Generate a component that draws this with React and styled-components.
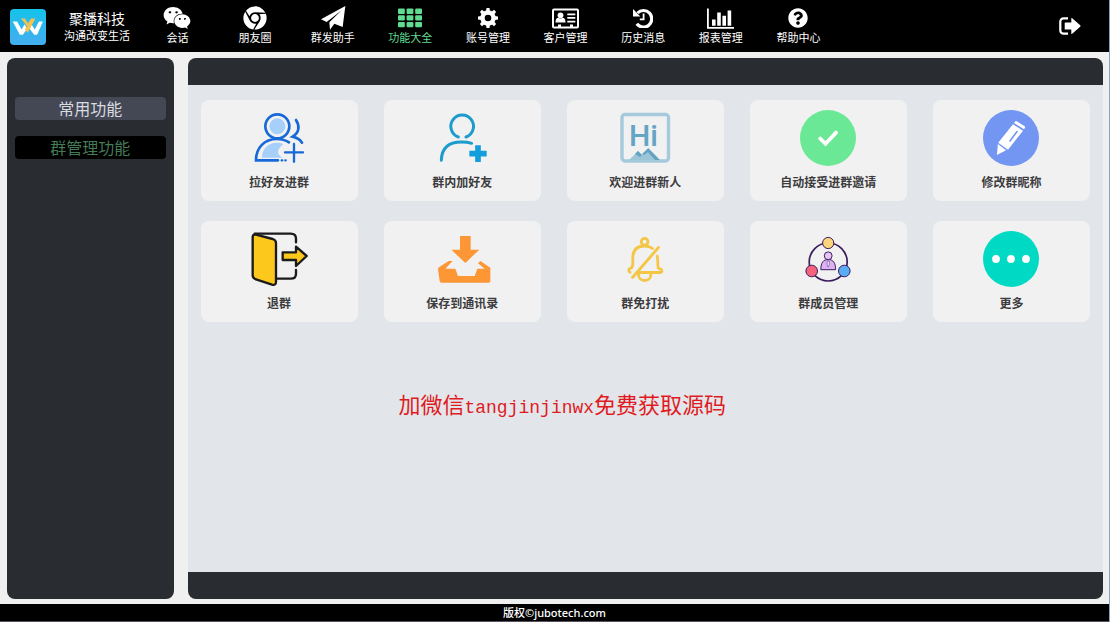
import styled, { createGlobalStyle, css } from "styled-components";
import { FaWeixin, FaChrome, FaQuestionCircle } from "react-icons/fa";

const GlobalStyle = createGlobalStyle`
    * {
        box-sizing: border-box;
    }
    body {
        margin: 0;
        background-color: #f1f0f1;
        font-family: "Noto Sans", "Noto Sans CJK SC", sans-serif;
    }
    button {
        font-family: inherit;
        border: none;
        cursor: pointer;
    }
`;
const Page = styled.div`
    display: flex;
    flex-direction: column;
    min-height: 100vh;
    border-right: 1px solid #86a3bb;
`;
const Header = styled.header`
    display: flex;
    align-items: center;
    height: 52px;
    color: white;
    background-color: black;
`;
const Brand = styled.div`
    display: flex;
    align-items: center;
    gap: 18px;
    width: 12.5%;
    padding-top: 1px;
    padding-left: 10px;
    flex-shrink: 0;
`;
const BrandText = styled.div`
    display: flex;
    flex-direction: column;
    align-items: center;
    white-space: nowrap;
`;
const BrandName = styled.span`
    font-size: 14px;
    line-height: 18px;
`;
const BrandSlogan = styled.span`
    font-size: 11px;
    line-height: 16px;
`;
const Nav = styled.nav`
    display: flex;
    width: 63%;
`;
const NavLink = styled.a`
    display: flex;
    flex: 1;
    flex-direction: column;
    align-items: center;
    gap: 1px;
    padding-top: 1px;
    font-size: 11px;
    line-height: 16px;
    white-space: nowrap;
    text-decoration: none;
    color: ${({ $active }) => ($active ? "#5fdc92" : "white")};
`;
const NavIcon = styled.span`
    display: flex;
    align-items: center;
    justify-content: center;
    height: 22px;
    svg {
        flex-shrink: 0;
        width: ${({ $size }) => $size}px;
        height: ${({ $size }) => $size}px;
    }
`;
const ExitButton = styled.button`
    display: flex;
    margin-left: auto;
    margin-right: 28px;
    padding: 0;
    color: white;
    background: none;
`;
const Body = styled.div`
    display: flex;
    flex: 1;
    gap: 14px;
    padding: 6px 6px 5px 7px;
`;
const Sidebar = styled.aside`
    display: flex;
    flex-direction: column;
    gap: 16px;
    width: 15.2%;
    padding: 39px 8px;
    border-radius: 8px;
    background-color: #292c31;
`;
const SideButton = styled.button`
    height: 23px;
    padding: 0;
    border-radius: 4px;
    font-size: 16px;
    line-height: 24px;
    color: #d9dbe0;
    background-color: #444854;
    ${({ $active }) =>
        $active &&
        css`
            color: #447a56;
            background-color: black;
        `}
`;
const Main = styled.main`
    display: flex;
    flex: 1;
    flex-direction: column;
    overflow: hidden;
    border-top: 27px solid #292c31;
    border-bottom: 27px solid #292c31;
    border-radius: 8px;
    background-color: #e2e6ea;
`;
const CardGrid = styled.div`
    display: grid;
    grid-template-columns: repeat(5, 1fr);
    gap: 20px 26px;
    padding: 15px 13px;
`;
const Card = styled.button`
    display: flex;
    flex-direction: column;
    align-items: center;
    justify-content: flex-start;
    gap: 9px;
    height: 101px;
    padding: 10px 0;
    border-radius: 8px;
    background-color: #f1f1f1;
`;
const CardIcon = styled.svg`
    width: 56px;
    height: 56px;
    overflow: visible;
`;
const CardLabel = styled.span`
    font-size: 12px;
    font-weight: 600;
    line-height: 16px;
    color: #3c3c3e;
`;
const Notice = styled.p`
    margin: 53px 0 0;
    padding-right: 166px;
    font-family: "Liberation Serif", "Noto Sans CJK SC", serif;
    font-size: 22px;
    line-height: 32px;
    text-align: center;
    color: #e01b1f;
`;
const NoticeId = styled.span`
    font-family: "Liberation Mono", monospace;
    font-size: 18px;
`;
const Footer = styled.footer`
    height: 18px;
    border-bottom: 1px solid #57505f;
    font-size: 11px;
    font-weight: 500;
    line-height: 17px;
    text-align: center;
    color: white;
    background-color: black;
`;

const Logo = () => (
    <svg width="36" height="36" viewBox="0 0 106 106" aria-hidden="true">
        <defs>
            <linearGradient id="logoBg" x1="0" y1="0" x2="0" y2="1">
                <stop offset="0" stopColor="#14c3ea" />
                <stop offset="1" stopColor="#45adf0" />
            </linearGradient>
        </defs>
        <rect width="106" height="106" rx="12" fill="url(#logoBg)" />
        <path d="M8 37h13l13 23 9-15 10 17 10-17 10 15 12-23h12L80 76h-9L54 53 38 76h-9Z" fill="#fff" />
        <path d="M32 28h12l9 14 9-14h13L60 56l-8 14-8-10 6-10Z" fill="#f3c251" />
    </svg>
);

const PlaneIcon = () => (
    <svg viewBox="150 17 78 78" fill="currentColor">
        <path d="M226 20L218 83 193 73 180 91 178 69 215 33 170 68 153 60Z" />
    </svg>
);

const GridIcon = () => (
    <svg viewBox="0 0 24 24" fill="currentColor">
        {[2.5, 9.2, 15.9].map((y) =>
            [0, 8.6, 17.2].map((x) => <rect key={x + "-" + y} x={x} y={y} width="6.800" height="5.400" rx="1" />)
        )}
    </svg>
);

const GearIcon = () => (
    <svg viewBox="0 0 20 20" fill="currentColor">
        <circle cx="10" cy="10" r="5.500" fill="none" stroke="currentColor" strokeWidth="4.400" />
        {[0, 45, 90, 135, 180, 225, 270, 315].map((deg) => (
            <path key={deg} d="M8.100 3.500L8.500 0h3l.4 3.500Z" transform={`rotate(${deg} 10 10)`} />
        ))}
    </svg>
);

const ContactsIcon = () => (
    <svg viewBox="0 -2.500 27 27" fill="currentColor">
        <path
            fillRule="evenodd"
            d="M2 1h23a2 2 0 0 1 2 2v16a2 2 0 0 1-2 2H2a2 2 0 0 1-2-2V3a2 2 0 0 1 2-2Zm0 2v16h4v-2h3v2h9v-2h3v2h4V3Z"
        />
        <circle cx="8.500" cy="7.800" r="2.900" />
        <path d="M3.500 15c0-3.200 1-4.800 2.800-4.800 1.400 1.100 3 1.100 4.400 0 1.800 0 2.800 1.600 2.800 4.800Z" />
        <path d="M15.300 6h8v1.700h-8zM15.300 9.600h8v1.700h-8zM15.300 13.200h8v1.700h-8z" />
    </svg>
);

const HistoryIcon = () => (
    <svg viewBox="0 0 20 20" fill="none" stroke="currentColor">
        <path d="M4.500 5A8.300 8.300 0 1 1 3.800 15.800" strokeWidth="3.200" />
        <path d="M0 1v7.400h7.400Z" fill="currentColor" stroke="none" />
        <path d="M10.600 5.500v5.800H6.800" strokeWidth="1.800" />
    </svg>
);

const ChartIcon = () => (
    <svg viewBox="0 -2.500 27 27" fill="currentColor">
        <path d="M0 1h1.800v18.500H27v1.700H0zM5 12h3.600v6.300H5zM10.200 5h3.600v13.300h-3.600zM15.400 8.300H19v10h-3.600zM20.600 3h3.600v15.300h-3.600z" />
    </svg>
);

const ExitIcon = () => (
    <svg width="22" height="18" viewBox="0 0 22 18">
        <path d="M9 1.300H4.500A3.200 3.200 0 0 0 1.300 4.500v9a3.200 3.200 0 0 0 3.200 3.200H9" fill="none" stroke="#fff" strokeWidth="2.200" />
        <path d="M6.300 5.500h6V1.600q0-1 .9-.3l8 7q.7.700 0 1.400l-8 7q-.9.700-.9-.3V12.500h-6q-.6 0-.6-.6V6.100q0-.6.600-.6Z" fill="#fff" />
    </svg>
);

const PullFriend = () => (
    <CardIcon viewBox="181 60 168 168" fill="none" stroke="#1669d6" strokeWidth="8" strokeLinecap="round">
        <circle cx="260" cy="109" r="36" />
        <circle cx="260" cy="109" r="24" fill="#a6cffa" stroke="none" />
        <path d="M262 211H196c0-38 26-64 62-64 14 0 26 3 37 10" />
        <path d="M214 203c0-26 18-45 44-45 8 0 14 1 20 4-18 16-22 28-4 41Z" fill="#a6cffa" stroke="none" />
        <path d="M273 211h2M284 211h1" strokeWidth="7" />
        <path d="M316 90c12 18 10 38-10 50 12 3 22 9 28 18" />
        <path d="M310 162v53M283 187h54" strokeWidth="7" />
    </CardIcon>
);

const AddFriend = () => (
    <CardIcon viewBox="732 60 168 168" fill="none" stroke="#1c9bcd" strokeWidth="9" strokeLinecap="round">
        <path d="M805 141a34 34 0 1 1 23 0" />
        <path d="M754 211c1-37 22-55 60-55 12 0 22 1 31 4" />
        <path d="M864 166v50M838 191h52" stroke="#139ddb" strokeWidth="17" strokeLinecap="butt" />
    </CardIcon>
);

const WelcomeText = styled.text`
    font-family: Roboto, sans-serif;
    font-size: 30px;
    font-weight: 500;
`;
const Welcome = () => (
    <CardIcon viewBox="0 0 56 56">
        <rect x="5" y="4.500" width="46.500" height="46.500" rx="3" fill="none" stroke="#a4cadb" strokeWidth="3.400" />
        <WelcomeText x="12" y="36" fill="#63a5c5">Hi</WelcomeText>
        <path d="M12 50L21 41l4 4 6-7 11 12Z" fill="#9cc5d8" />
        <path d="M21 41l4 4-2 2-5-3ZM31.400 38.300L43 50H38l-7-8-4 3-2-1Z" fill="#62a3c2" />
    </CardIcon>
);

const AutoAccept = () => (
    <CardIcon viewBox="0 0 56 56">
        <circle cx="28" cy="28" r="28" fill="#6be895" />
        <path d="M20.200 28.500l5.300 5.300L36 22.600" fill="none" stroke="#fff" strokeWidth="3.800" strokeLinecap="round" />
    </CardIcon>
);

const EditName = () => (
    <CardIcon viewBox="0 0 56 56">
        <circle cx="28" cy="28" r="28" fill="#7396f3" />
        <g fill="#fff">
            <path d="M32.200 11.400q.6-.7 1.500-.1l8 5q.8.600.3 1.400l-1 1.500-10-6.300Z" />
            <path d="M30 14.200l10 6.500L25 39.700l-9.800-7Z" />
            <path d="M14.900 34l8.200 6.200-9.200 4.700Z" />
        </g>
        <path d="M27 31l7-9.500" stroke="#7396f3" strokeWidth="1.600" strokeLinecap="round" />
    </CardIcon>
);

const LeaveGroup = () => (
    <CardIcon viewBox="181 48 168 168" fill="#fcc81c" stroke="#1b1b1b" strokeWidth="7" strokeLinecap="round" strokeLinejoin="round">
        <path d="M192 56h108q16 0 16 15v11M316 165v11q0 15-16 15h-42" fill="none" />
        <path d="M196 59l50 13q10 3 10 12v116q0 12-12 9l-48-16q-10-3-10-12V67q0-10 10-8Z" />
        <path d="M276 112h40V95l32 28-32 30v-18h-40Z" />
    </CardIcon>
);

const SaveContacts = () => (
    <CardIcon viewBox="732 48 168 168" fill="#fd9736">
        <path d="M810 63h32v41h26l-42 40-42-40h26Z" />
        <path d="M776 138h12l-22 23h30l8 22h50l8-22h22l-20-16 7-7 30 20v40q0 5-5 5H754q-4 0-5-5l-5-35q0-4 4-7Z" />
    </CardIcon>
);

const MuteGroup = () => (
    <CardIcon viewBox="0 0 56 56" fill="none" stroke="#f4c645" strokeWidth="2.800" strokeLinecap="round">
        <circle cx="27.600" cy="10.800" r="3.400" />
        <path d="M15.800 33V27c0-8 4.500-12 11.800-12 3.500 0 6 .9 8 2.500M40.200 25c1 4 .3 9 1 12l3 1.500c1.300 1.300.5 3-.5 3H22M15.800 33c0 3-.6 4-2.800 4.500-1.800 1-1.600 3 0 3.800" />
        <path d="M41.500 16.500L15.500 46.500M21.500 43.500c0 3.500 2.500 6 6.200 6s6.200-2.500 6.200-6" />
    </CardIcon>
);

const Members = () => (
    <CardIcon viewBox="0 0 56 56" stroke="#3b1d5e" strokeWidth="1">
        <circle cx="28.200" cy="31" r="19" fill="none" strokeWidth="1.700" />
        <circle cx="28.200" cy="12" r="5.600" fill="#fbd57c" />
        <circle cx="11.700" cy="40" r="5.800" fill="#f4627b" />
        <circle cx="44.300" cy="40" r="5.800" fill="#5aadf4" />
        <path d="M20.800 38.700c0-7 2.500-10.200 7.400-10.200s7.400 3.200 7.400 10.200Z" fill="#dcb0f4" />
        <circle cx="28.200" cy="24.800" r="3.900" fill="#e7c3f6" />
        <path d="M27.200 30h2v4l-1 2-1-2Z" fill="#fff" strokeWidth=".5" />
    </CardIcon>
);

const More = () => (
    <CardIcon viewBox="0 0 56 56">
        <circle cx="28" cy="28" r="28" fill="#00dac4" />
        <g fill="#fff">
            <circle cx="13" cy="28" r="3.900" />
            <circle cx="28" cy="28" r="3.900" />
            <circle cx="43" cy="28" r="3.900" />
        </g>
    </CardIcon>
);

const navItems = [
    { label: "会话", Icon: FaWeixin, size: 28 },
    { label: "朋友圈", Icon: FaChrome, size: 24 },
    { label: "群发助手", Icon: PlaneIcon, size: 26 },
    { label: "功能大全", Icon: GridIcon, size: 24, active: true },
    { label: "账号管理", Icon: GearIcon, size: 20 },
    { label: "客户管理", Icon: ContactsIcon, size: 27 },
    { label: "历史消息", Icon: HistoryIcon, size: 20 },
    { label: "报表管理", Icon: ChartIcon, size: 27 },
    { label: "帮助中心", Icon: FaQuestionCircle, size: 20 },
];

const cards = [
    { label: "拉好友进群", Icon: PullFriend },
    { label: "群内加好友", Icon: AddFriend },
    { label: "欢迎进群新人", Icon: Welcome },
    { label: "自动接受进群邀请", Icon: AutoAccept },
    { label: "修改群昵称", Icon: EditName },
    { label: "退群", Icon: LeaveGroup },
    { label: "保存到通讯录", Icon: SaveContacts },
    { label: "群免打扰", Icon: MuteGroup },
    { label: "群成员管理", Icon: Members },
    { label: "更多", Icon: More },
];

export default function App() {
    return (
        <>
            <GlobalStyle />
            <Page>
                <Header>
                    <Brand>
                        <Logo />
                        <BrandText>
                            <BrandName>聚播科技</BrandName>
                            <BrandSlogan>沟通改变生活</BrandSlogan>
                        </BrandText>
                    </Brand>
                    <Nav>
                        {navItems.map(({ label, Icon, size, active }) => (
                            <NavLink key={label} href="#" $active={active}>
                                <NavIcon $size={size}>
                                    <Icon />
                                </NavIcon>
                                {label}
                            </NavLink>
                        ))}
                    </Nav>
                    <ExitButton aria-label="退出">
                        <ExitIcon />
                    </ExitButton>
                </Header>
                <Body>
                    <Sidebar>
                        <SideButton>常用功能</SideButton>
                        <SideButton $active>群管理功能</SideButton>
                    </Sidebar>
                    <Main>
                        <CardGrid>
                            {cards.map(({ label, Icon }) => (
                                <Card key={label}>
                                    <Icon />
                                    <CardLabel>{label}</CardLabel>
                                </Card>
                            ))}
                        </CardGrid>
                        <Notice>
                            加微信<NoticeId>tangjinjinwx</NoticeId>免费获取源码
                        </Notice>
                    </Main>
                </Body>
                <Footer>版权©jubotech.com</Footer>
            </Page>
        </>
    );
}
